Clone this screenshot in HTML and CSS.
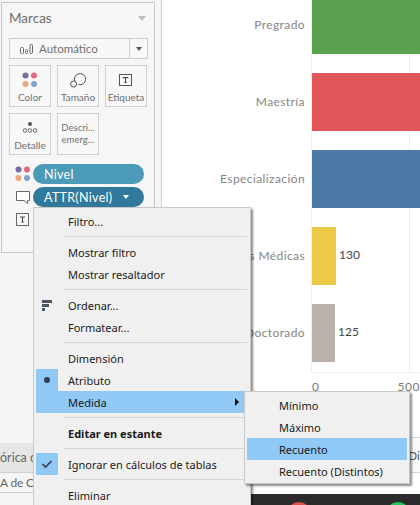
FILE: index.html
```html
<!DOCTYPE html>
<html lang="es">
<head>
<meta charset="utf-8">
<title>Marcas</title>
<link rel="stylesheet" href="styles.css">
</head>
<body>
<div class="app">
  <div class="main">
    <aside class="pane">
      <section class="card">
        <header class="card-head">
          <span class="card-title">Marcas</span>
          <span class="tri-gray"></span>
        </header>
        <div class="select">
          <svg class="bars-icon" width="13" height="10" viewBox="0 0 13 10"><g fill="none" stroke="#666" stroke-width="1"><rect x="0.5" y="3.5" width="3" height="6" rx="1"/><rect x="5.5" y="5.5" width="2" height="4" rx="1"/><rect x="10" y="0.5" width="2.500" height="9" rx="1"/></g></svg>
          <span class="select-text">Automático</span>
          <span class="select-arrow"><span class="tri-dark"></span></span>
        </div>
        <div class="shelf-grid">
          <div class="shelf">
            <svg class="shelf-icon" width="16" height="16" viewBox="0 0 16 16"><circle cx="3.5" cy="3.5" r="3" fill="#7b6a9c"/><circle cx="12" cy="3.5" r="3" fill="#e8637f"/><circle cx="3.5" cy="12" r="3" fill="#eba57e"/><circle cx="12" cy="12" r="3" fill="#7fa3cc"/></svg>
            <span>Color</span>
          </div>
          <div class="shelf">
            <svg class="shelf-icon" width="16" height="16" viewBox="0 0 16 16"><g fill="none" stroke="#555" stroke-width="1"><path d="M5 9.500A5.600 5.600 0 1 1 8.500 12.500"/><circle cx="3.600" cy="12" r="3"/></g></svg>
            <span>Tamaño</span>
          </div>
          <div class="shelf">
            <svg class="shelf-icon" width="16" height="16" viewBox="0 0 16 16"><rect x="1.5" y="2.5" width="12" height="11" fill="none" stroke="#555"/><path d="M5 5.5h5M7.5 5.5v5M6.3 10.5h2.4M5 5.5v1M10 5.5v1" fill="none" stroke="#444"/></svg>
            <span>Etiqueta</span>
          </div>
          <div class="shelf">
            <svg class="shelf-icon" width="16" height="16" viewBox="0 0 16 16"><circle cx="8" cy="4" r="2" fill="#555"/><g fill="none" stroke="#666"><circle cx="3" cy="10.5" r="1.8"/><circle cx="8" cy="10.5" r="1.8"/><circle cx="13" cy="10.5" r="1.8"/></g></svg>
            <span>Detalle</span>
          </div>
          <div class="shelf shelf-text">
            <span>Descri...</span>
            <span>emerg...</span>
          </div>
        </div>
        <div class="pill-row">
          <svg width="16" height="16" viewBox="0 0 16 16"><circle cx="3.5" cy="3.5" r="3" fill="#7b6a9c"/><circle cx="12" cy="3.5" r="3" fill="#e8637f"/><circle cx="3.5" cy="12" r="3" fill="#eba57e"/><circle cx="12" cy="12" r="3" fill="#7fa3cc"/></svg>
          <span class="pill pill-light">Nivel</span>
        </div>
        <div class="pill-row">
          <svg width="16" height="16" viewBox="0 0 16 16"><path d="M1.5 2.5h13v9h-2v3l-3.500-3h-7.500z" fill="#fff" stroke="#666"/></svg>
          <span class="pill pill-dark">ATTR(Nivel)<span class="tri-white"></span></span>
        </div>
        <div class="pill-row">
          <svg width="16" height="16" viewBox="0 0 16 16"><rect x="1.500" y="1.500" width="12" height="12" fill="none" stroke="#666"/><path d="M5 5h5M7.500 5v5M6.300 10h2.400" fill="none" stroke="#444"/></svg>
        </div>
      </section>
    </aside>
    <main class="chart">
      <div class="plot">
        <div class="cat">Pregrado</div><div class="bar-cell"><div class="bar bar-green"></div></div>
        <div class="cat">Maestría</div><div class="bar-cell"><div class="bar bar-red"></div></div>
        <div class="cat">Especialización</div><div class="bar-cell"><div class="bar bar-blue"></div></div>
        <div class="cat">Especialidades Médicas</div><div class="bar-cell"><div class="bar bar-yellow"></div><span class="val">130</span></div>
        <div class="cat">Doctorado</div><div class="bar-cell"><div class="bar bar-gray"></div><span class="val">125</span></div>
      </div>
      <div class="axis"><span>0</span><span>500</span></div>
    </main>
  </div>
  <footer class="footer">
    <div class="foot-left">
      <div class="tab tab-a">órica de CNA</div>
      <div class="tab tab-b">A de CNA</div>
    </div>
    <div class="foot-right">
      <div class="foot-row"><span>Di</span></div>
      <div class="dark-bar"><span class="dot dot-red"></span><span class="dot dot-green"></span></div>
    </div>
  </footer>

  <nav class="menu">
    <div class="mi"><span class="gut"></span>Filtro...</div>
    <div class="sep"></div>
    <div class="mi"><span class="gut"></span>Mostrar filtro</div>
    <div class="mi"><span class="gut"></span>Mostrar resaltador</div>
    <div class="sep"></div>
    <div class="mi"><span class="gut"><svg width="11" height="11" viewBox="0 0 11 11"><path d="M0 0h10v3H0zM0 4h7v3H0zM0 8h3v3H0z" fill="#4a5666"/></svg></span>Ordenar...</div>
    <div class="mi"><span class="gut"></span>Formatear...</div>
    <div class="sep"></div>
    <div class="mi"><span class="gut"></span>Dimensión</div>
    <div class="mi"><span class="gut gut-on"><span class="bullet"></span></span>Atributo</div>
    <div class="mi mi-on"><span class="gut"></span>Medida<span class="tri-right"></span></div>
    <div class="sep"></div>
    <div class="mi mi-bold"><span class="gut"></span>Editar en estante</div>
    <div class="sep"></div>
    <div class="mi"><span class="gut gut-on"><svg width="12" height="10" viewBox="0 0 12 10"><path d="M1.500 5l3 3 6-6" fill="none" stroke="#2f3f55" stroke-width="1.600"/></svg></span>Ignorar en cálculos de tablas</div>
    <div class="sep"></div>
    <div class="mi"><span class="gut"></span>Eliminar</div>
  </nav>

  <nav class="submenu">
    <div class="si">Mínimo</div>
    <div class="si">Máximo</div>
    <div class="si si-on">Recuento</div>
    <div class="si">Recuento (Distintos)</div>
  </nav>
</div>
</body>
</html>
```

FILE: styles.css
```css
* { box-sizing: border-box; }
html, body { margin: 0; padding: 0; background: #fff; }
body { width: 420px; height: 505px; overflow: hidden; }

.app {
  position: relative;
  width: 420px;
  height: 505px;
  overflow: hidden;
  font-family: "Lato", "Liberation Sans", sans-serif;
  color: #666;
}

.main { display: flex; height: 437px; }

/* left pane */
.pane {
  flex: 0 0 162px;
  height: 437px;
  padding: 2px 6px 0 1px;
  background: #f5f5f5;
  border-right: 1px solid #cfcfcf;
}
.card {
  height: 251px;
  padding: 0 6px 0 7px;
  border: 1px solid #c6c6c6;
  background: #f6f6f6;
}
.card-head {
  display: flex;
  align-items: center;
  justify-content: space-between;
  height: 35px;
  padding: 0 2px 5px 0;
}
.card-title { font-size: 13.500px; color: #707070; }
.tri-gray {
  width: 0; height: 0;
  border: 4px solid transparent;
  border-top: 5px solid #bdbdbd;
  border-bottom: 0;
}
.select {
  display: flex;
  align-items: center;
  width: 139px;
  height: 21px;
  padding-left: 10px;
  border: 1px solid #cdcdcd;
  background: #f8f8f8;
}
.select-text { margin-left: 6px; font-size: 11.500px; color: #707070; flex: 1; }
.select-arrow {
  display: flex;
  align-items: center;
  justify-content: center;
  width: 18px;
  height: 100%;
  border-left: 1px solid #cdcdcd;
}
.tri-dark {
  width: 0; height: 0;
  border: 3.500px solid transparent;
  border-top: 4px solid #555;
  border-bottom: 0;
}

.shelf-grid {
  display: grid;
  grid-template-columns: 42px 42px 42px;
  grid-auto-rows: 42px;
  column-gap: 6px;
  row-gap: 6px;
  margin-top: 6px;
  width: 139px;
}
.shelf {
  display: flex;
  flex-direction: column;
  align-items: center;
  justify-content: space-between;
  padding: 6px 0 3px;
  border: 1px solid #cfcfcf;
  background: #f8f8f8;
  font-size: 10px;
  color: #707070;
  white-space: nowrap;
}
.shelf-text { justify-content: center; padding: 0; line-height: 12px; font-size: 9.500px; }

.pill-row {
  display: flex;
  align-items: center;
  gap: 2px;
  height: 20px;
  margin-top: 3px;
  padding-left: 6px;
}
.shelf-grid + .pill-row { margin-top: 9px; }
.pill {
  display: flex;
  align-items: center;
  width: 111px;
  height: 20px;
  padding-left: 11px;
  border-radius: 10px;
  color: #fff;
  font-size: 12.500px;
  letter-spacing: 0.3px;
}
.pill-light { background: #4a9ab8; }
.pill-dark { background: #31799b; }
.tri-white {
  width: 0; height: 0;
  margin-left: 11px;
  border: 3.500px solid transparent;
  border-top: 4px solid #fff;
  border-bottom: 0;
}

/* chart */
.chart { flex: 1; min-width: 0; }
.plot {
  display: grid;
  grid-template-columns: 143px 1fr;
  grid-auto-rows: 58px;
  row-gap: 19px;
  height: 376px;
  margin-top: -4px;
  background-image: linear-gradient(#efefef, #efefef), linear-gradient(#efefef, #efefef);
  background-repeat: no-repeat;
  background-size: 1px 100%;
  background-position: 149px 0, 247px 0;
}
.cat {
  display: flex;
  align-items: center;
  justify-content: flex-end;
  white-space: nowrap;
  font-size: 12px;
  letter-spacing: 0.4px;
  color: #858585;
  padding-bottom: 1px;
}
.bar-cell { display: flex; align-items: center; margin-left: 7px; }
.bar { height: 100%; }
.bar-green { width: 100%; background: #59a14f; }
.bar-red { width: 100%; background: #e15759; }
.bar-blue { width: 100%; background: #4e79a7; }
.bar-yellow { width: 24px; background: #edc948; }
.bar-gray { width: 23px; background: #bab0ac; }
.val { margin: 0 0 3px 3px; font-size: 12px; color: #444; }
.axis {
  display: flex;
  justify-content: space-between;
  height: 65px;
  margin-left: 149px;
  padding: 7px 0 0 1px;
  border-top: 1px solid #efefef;
  font-size: 12px;
  letter-spacing: 0.5px;
  color: #777;
  line-height: 14px;
}

/* bottom strip */
.footer { display: flex; height: 68px; }
.foot-left { flex: 0 0 162px; background: #f5f5f5; padding-top: 6px; }
.tab {
  overflow: hidden;
  white-space: nowrap;
  font-size: 12.500px;
  color: #666;
  border-bottom: 1px solid #cfcfcf;
  display: flex;
  align-items: center;
}
.tab-a { height: 30px; background: #e6e6e6; }
.tab-b { height: 20px; background: #f5f5f5; font-size: 12px; letter-spacing: -0.2px; }
.foot-right { flex: 1; display: flex; flex-direction: column; }
.foot-row {
  display: flex;
  align-items: center;
  justify-content: flex-end;
  height: 36px;
  border-top: 1px solid #d8d8d8;
  border-bottom: 1px solid #d8d8d8;
  font-size: 12px;
  color: #555;
  background: #fafafa;
}
.dark-bar {
  display: flex;
  gap: 75px;
  height: 11px;
  margin-top: 21px;
  padding: 8px 0 0 125px;
  overflow: hidden;
  background: #2b2b2b;
}
.dot { flex: 0 0 24px; height: 24px; border-radius: 50%; }
.dot-red { background: #d9504c; }
.dot-green { background: #27c25f; }

/* context menus */
.menu, .submenu {
  position: absolute;
  padding: 2px;
  background: #f0f0f0;
  border: 1px solid #c9c9c9;
  box-shadow: 2px 2px 2px rgba(0, 0, 0, 0.45);
  font-family: "Noto Sans", "Open Sans", sans-serif;
  font-size: 11px;
  color: #1a1a1a;
}
.menu { left: 33px; top: 207px; width: 218px; height: 320px; }
.submenu { left: 244px; top: 391px; width: 166px; height: 93px; }
.mi {
  display: flex;
  align-items: center;
  height: 22px;
  white-space: nowrap;
}
.gut {
  display: flex;
  align-items: center;
  justify-content: center;
  flex: 0 0 22px;
  height: 22px;
  margin-right: 10px;
}
.gut-on { background: #90c8f6; }
.bullet { width: 6px; height: 6px; border-radius: 50%; background: #2f3f55; }
.mi-on { background: #90c8f6; position: relative; }
.mi-bold { font-weight: 700; }
.tri-right {
  position: absolute;
  right: 9px;
  top: 7px;
  width: 0; height: 0;
  border: 4px solid transparent;
  border-left: 4px solid #111;
  border-right: 0;
}
.sep { height: 9px; margin-left: 28px; margin-right: 1px; position: relative; }
.sep::after {
  content: "";
  position: absolute;
  left: 0; right: 0; top: 4px;
  height: 1px;
  background: #d4d4d4;
}
.si {
  display: flex;
  align-items: center;
  height: 22px;
  padding-left: 32px;
  white-space: nowrap;
}
.si-on { background: #90c8f6; }
```
